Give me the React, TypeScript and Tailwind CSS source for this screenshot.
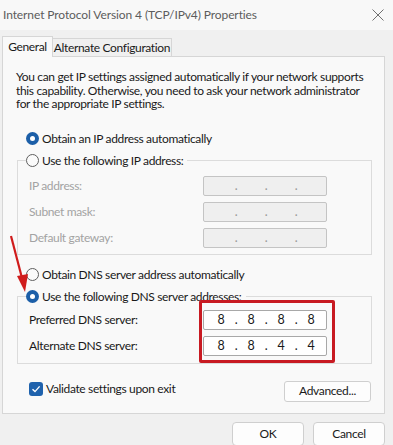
import React from "react";

function Radio({ checked }: { checked?: boolean }) {
    if (checked) {
        return (
            <span className="flex h-[13px] w-[13px] shrink-0 items-center justify-center rounded-full bg-[#1c5fa8]">
                <span className="h-[5px] w-[5px] rounded-full bg-white" />
            </span>
        );
    }
    return <span className="h-[13px] w-[13px] shrink-0 rounded-full border border-[#5f5f5f] bg-[#fbfbfb]" />;
}

function IpBox({ values, disabled }: { values?: string[]; disabled?: boolean }) {
    const parts = values ?? ["", "", "", ""];
    return (
        <div
            className={`flex h-[20px] w-[124px] items-center rounded-[2px] border pl-[5px] text-[12.5px] ${
                disabled ? "border-[#c4c4c4] bg-[#efefef] text-[#9a9a9a]" : "border-[#a8a8a8] bg-white text-[#1a1a1a]"
            }`}
        >
            {parts.map((p, i) => (
                <React.Fragment key={i}>
                    <span className="w-[24px] text-center">{p}</span>
                    {i < 3 && <span className="w-[6px] text-center">.</span>}
                </React.Fragment>
            ))}
        </div>
    );
}

function Row({ label, values, disabled }: { label: string; values?: string[]; disabled?: boolean }) {
    return (
        <div className="ml-[3px] flex h-[20px] items-center">
            <span className={`w-[174px] ${disabled ? "text-[#a3a3a3]" : "text-[#1a1a1a]"}`}>{label}</span>
            <IpBox values={values} disabled={disabled} />
        </div>
    );
}

export default function App() {
    return (
        <div className="relative h-[445px] w-[393px] overflow-hidden bg-[#f0f0f0] font-[Lato,sans-serif] text-[12px] leading-[16px] tracking-[-0.35px] text-[#1a1a1a]">
            {/* title bar */}
            <div className="flex h-[30px] items-center justify-between bg-[#f8f8f8] pl-[3px] pr-[8px]">
                <span className="text-[12px] tracking-[-0.1px] text-[#5c5c5c]">Internet Protocol Version 4 (TCP/IPv4) Properties</span>
                <svg width="12" height="12" viewBox="0 0 12 12" className="mr-[1px]">
                    <path d="M0.5 0.5 L11.5 11.5 M11.5 0.5 L0.5 11.5" stroke="#707070" strokeWidth="1" />
                </svg>
            </div>

            {/* tabs */}
            <div className="mt-[6px] flex items-end pl-[2px]">
                <div className="relative z-10 -mb-px flex h-[21px] w-[51px] items-center justify-center border border-b-0 border-[#d6d6d6] bg-[#f9f9f9]">
                    General
                </div>
                <div className="flex h-[18px] w-[119px] items-center justify-center whitespace-nowrap border border-l-0 border-b-0 border-[#d6d6d6] bg-[#f0f0f0]">
                    Alternate Configuration
                </div>
            </div>

            {/* panel */}
            <div className="mx-[2px] h-[358px] w-[383px] border border-[#d6d6d6] bg-[#f9f9f9] pt-[13px]">
                <p className="whitespace-nowrap pl-[13px] leading-[13.5px]">
                    You can get IP settings assigned automatically if your network supports
                    <br />
                    this capability. Otherwise, you need to ask your network administrator
                    <br />
                    for the appropriate IP settings.
                </p>

                <div className="mt-[20px] flex h-[16px] items-center gap-[3px] pl-[23px]">
                    <Radio checked />
                    <span>Obtain an IP address automatically</span>
                </div>

                <fieldset className="mx-[14px] mt-[6px] w-[355px] border border-[#dcdcdc] pb-[6px] pl-[8px]">
                    <legend className="flex h-[16px] items-center gap-[3px] pr-[4px]">
                        <Radio />
                        <span>Use the following IP address:</span>
                    </legend>
                    <div className="flex flex-col gap-[6px] pt-[7px]">
                        <Row label="IP address:" disabled />
                        <Row label="Subnet mask:" disabled />
                        <Row label="Default gateway:" disabled />
                    </div>
                </fieldset>

                <div className="mt-[12px] flex h-[16px] items-center gap-[3px] pl-[23px]">
                    <Radio />
                    <span>Obtain DNS server address automatically</span>
                </div>

                <fieldset className="mx-[14px] mt-[6px] w-[355px] border border-[#dcdcdc] pb-[7px] pl-[8px]">
                    <legend className="flex h-[16px] items-center gap-[3px] pr-[4px]">
                        <Radio checked />
                        <span>Use the following DNS server addresses:</span>
                    </legend>
                    <div className="flex flex-col gap-[6px] pt-[5px]">
                        <Row label="Preferred DNS server:" values={["8", "8", "8", "8"]} />
                        <Row label="Alternate DNS server:" values={["8", "8", "4", "4"]} />
                    </div>
                </fieldset>

                <div className="mt-[17px] flex items-start justify-between pl-[26px] pr-[13px]">
                    <div className="flex h-[16px] items-center gap-[3px]">
                        <span className="flex h-[14px] w-[14px] items-center justify-center rounded-[3px] bg-[#1f62ad]">
                            <svg width="10" height="10" viewBox="0 0 10 10">
                                <path d="M1.5 5.2 L4 7.6 L8.6 2.4" fill="none" stroke="white" strokeWidth="1.4" />
                            </svg>
                        </span>
                        <span>Validate settings upon exit</span>
                    </div>
                    <button className="h-[21px] w-[87px] rounded-[3px] border border-[#cfcfcf] bg-[#fdfdfd]">Advanced...</button>
                </div>
            </div>

            {/* dialog buttons */}
            <div className="mt-[8px] flex justify-end gap-[9px] pr-[8px]">
                <button className="h-[24px] w-[72px] rounded-[4px] border border-[#cfcfcf] bg-[#fdfdfd]">OK</button>
                <button className="h-[24px] w-[72px] rounded-[4px] border border-[#cfcfcf] bg-[#fdfdfd]">Cancel</button>
            </div>

            {/* annotations */}
            <div className="absolute left-[199px] top-[300px] h-[63px] w-[136px] rounded-[2px] border-[3px] border-[#c81a22]" />
            <svg className="absolute left-0 top-[230px]" width="40" height="66" viewBox="0 0 40 66">
                <path d="M11 6 L22 48" stroke="#d01c1c" strokeWidth="2.2" />
                <path d="M17 46 L25 62 L28 44 Z" fill="#d01c1c" />
            </svg>
        </div>
    );
}
